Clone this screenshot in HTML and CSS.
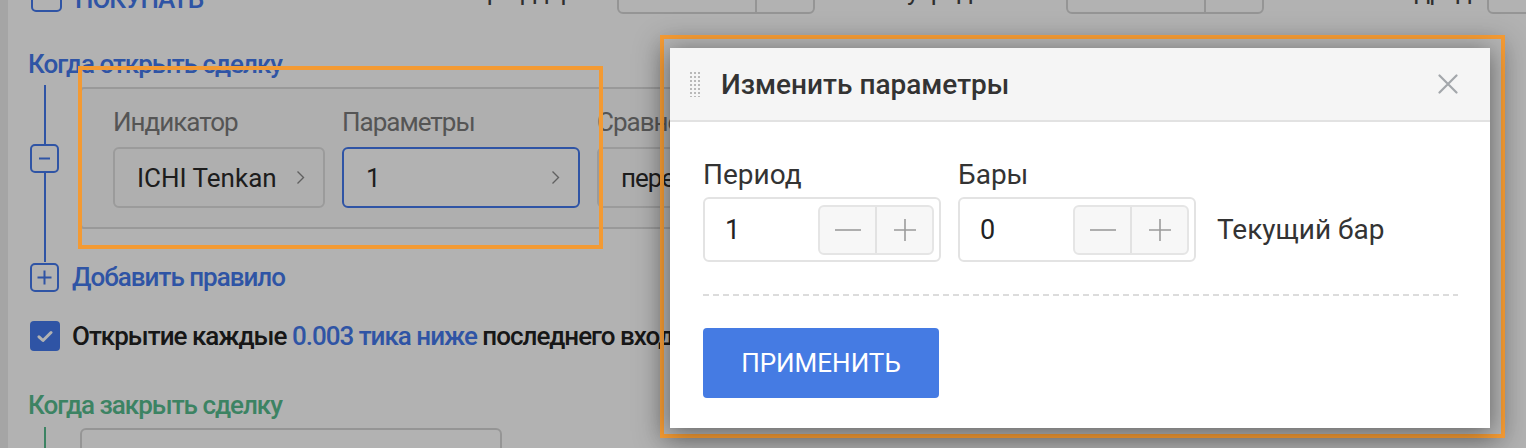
FILE: index.html
```html
<!DOCTYPE html>
<html lang="ru">
<head>
<meta charset="utf-8">
<title>Изменить параметры</title>
<link rel="stylesheet" href="styles.css">
</head>
<body>
<div class="page">
  <div class="strip"></div>
  <main class="main">
    <div class="topbar">
      <span class="cb-outline"></span>
      <span class="buy">ПОКУПАТЬ</span>
      <span class="top-label tl1">Размер ордера</span>
      <span class="top-input"><span class="top-div"></span></span>
      <span class="top-label tl2">Шаг усреднения</span>
      <span class="top-input"><span class="top-div"></span></span>
      <span class="top-label tl3">Подряд</span>
      <span class="top-input short"></span>
    </div>

    <div class="sec-title blue">Когда открыть сделку</div>

    <div class="rule-row">
      <div class="rail">
        <span class="seg seg-top"></span>
        <span class="rbox"><svg width="13" height="13" viewBox="0 0 13 13"><path d="M1 6.5H12" stroke="currentColor" stroke-width="2"/></svg></span>
        <span class="seg seg-fill"></span>
      </div>
      <div class="card">
        <div class="field f-ind">
          <div class="flabel">Индикатор</div>
          <div class="select">
            <span class="sval">ICHI Tenkan</span>
            <svg class="chev" width="9" height="15" viewBox="0 0 9 15"><path d="M1.5 1.5L7.5 7.5L1.5 13.5" fill="none" stroke="currentColor" stroke-width="1.4"/></svg>
          </div>
        </div>
        <div class="field f-par">
          <div class="flabel">Параметры</div>
          <div class="select active">
            <span class="sval">1</span>
            <svg class="chev" width="9" height="15" viewBox="0 0 9 15"><path d="M1.5 1.5L7.5 7.5L1.5 13.5" fill="none" stroke="currentColor" stroke-width="1.4"/></svg>
          </div>
        </div>
        <div class="field f-cmp">
          <div class="flabel">Сравнение</div>
          <div class="select">
            <span class="sval cyr">пересекает снизу</span>
          </div>
        </div>
      </div>
    </div>

    <div class="add-row">
      <span class="rbox"><svg width="15" height="15" viewBox="0 0 15 15"><path d="M0.5 7.5H14.5M7.5 0.5V14.5" stroke="currentColor" stroke-width="2"/></svg></span>
      <span class="add-text">Добавить правило</span>
    </div>

    <div class="check-row">
      <span class="cb-checked"><svg width="16" height="13" viewBox="0 0 16 13"><path d="M2 6.8L6 10.5L14 2.5" fill="none" stroke="#fff" stroke-width="3" stroke-linecap="round" stroke-linejoin="round"/></svg></span>
      <span class="check-text">Открытие каждые <span class="blue-txt">0.003 тика ниже</span> последнего входа</span>
    </div>

    <div class="sec-title green">Когда закрыть сделку</div>

    <div class="close-row">
      <div class="rail green-rail"><span class="seg seg-fill"></span></div>
      <div class="card2"></div>
    </div>
  </main>
</div>

<div class="overlay"></div>

<div class="hl hl-left"></div>
<div class="hl hl-modal"></div>

<div class="modal">
  <div class="modal-head">
    <span class="grip"></span>
    <span class="modal-title">Изменить параметры</span>
    <svg class="close" width="20" height="20" viewBox="0 0 20 20"><path d="M1.5 1.5L18.5 18.5M18.5 1.5L1.5 18.5" stroke="#a3a7ab" stroke-width="2.2" stroke-linecap="round"/></svg>
  </div>
  <div class="modal-body">
    <div class="params">
      <div class="pfield">
        <div class="plabel">Период</div>
        <div class="num">
          <span class="num-val">1</span>
          <span class="stepper">
            <span class="step"><svg width="26" height="4" viewBox="0 0 26 4"><path d="M0 2H26" stroke="#9b9b9b" stroke-width="1.6"/></svg></span>
            <span class="step-div"></span>
            <span class="step"><svg width="22" height="22" viewBox="0 0 22 22"><path d="M0 11H22M11 0V22" stroke="#9b9b9b" stroke-width="1.6"/></svg></span>
          </span>
        </div>
      </div>
      <div class="pfield">
        <div class="plabel">Бары</div>
        <div class="num">
          <span class="num-val">0</span>
          <span class="stepper">
            <span class="step"><svg width="26" height="4" viewBox="0 0 26 4"><path d="M0 2H26" stroke="#9b9b9b" stroke-width="1.6"/></svg></span>
            <span class="step-div"></span>
            <span class="step"><svg width="22" height="22" viewBox="0 0 22 22"><path d="M0 11H22M11 0V22" stroke="#9b9b9b" stroke-width="1.6"/></svg></span>
          </span>
        </div>
      </div>
      <div class="suffix">Текущий бар</div>
    </div>
    <div class="dash"></div>
    <button class="apply">ПРИМЕНИТЬ</button>
  </div>
</div>
</body>
</html>
```

FILE: styles.css
```css
* { box-sizing: border-box; }

html, body {
  margin: 0;
  padding: 0;
}

body {
  width: 1526px;
  height: 448px;
  overflow: hidden;
  background: #fff;
  font-family: Roboto, "Liberation Sans", sans-serif;
  color: #2a2a2a;
  position: relative;
}

.page {
  display: flex;
  height: 448px;
  overflow: hidden;
}

.strip {
  width: 8px;
  flex: none;
  background: #ececec;
}

.main {
  flex: 1;
  padding-left: 20px;
  display: flex;
  flex-direction: column;
}

/* top bar (only its bottom is visible) */
.topbar {
  display: flex;
  align-items: flex-end;
  height: 14px;
  overflow: hidden;
  flex: none;
}

.cb-outline {
  flex: none;
  width: 31px;
  height: 31px;
  margin-left: 3px;
  margin-bottom: 2px;
  border: 2px solid #4479ec;
  border-radius: 5px;
}

.buy {
  flex: none;
  width: 330px;
  margin-left: 13px;
  font-size: 26px;
  line-height: 30px;
  color: #4479ec;
  font-weight: 500;
  letter-spacing: -1px;
}

.top-label {
  flex: none;
  font-size: 26px;
  line-height: 30px;
  margin-bottom: 8px;
  color: #444;
  letter-spacing: -1px;
  white-space: nowrap;
  overflow: hidden;
}

.tl1 { width: 212px; padding-left: 10px; }
.tl2 { width: 251px; padding-left: 40px; }
.tl3 { width: 223px; padding-left: 120px; }

.top-input {
  flex: none;
  width: 198px;
  height: 40px;
  border: 2px solid #d6d6d6;
  border-radius: 6px;
  display: flex;
}

.top-input.short { width: 100px; }

.top-div {
  margin-left: 136px;
  width: 2px;
  background: #d6d6d6;
}

/* section titles */
.sec-title {
  font-size: 26px;
  line-height: 30px;
  font-weight: 500;
  letter-spacing: -1px;
  flex: none;
}

.sec-title.blue {
  color: #4479ec;
  margin-top: 35px;
}

.sec-title.green {
  color: #56bc8e;
  margin-top: 39px;
}

/* rule rows */
.rule-row {
  display: flex;
  margin-top: 6px;
  flex: none;
}

.rail {
  width: 29px;
  margin-left: 2px;
  display: flex;
  flex-direction: column;
  align-items: center;
  flex: none;
  color: #4479ec;
}

.seg {
  width: 2px;
  background: #4479ec;
}

.seg-top { height: 59px; }
.seg-fill { flex: 1; }

.rbox {
  width: 29px;
  height: 29px;
  border: 2px solid #4479ec;
  border-radius: 5px;
  display: flex;
  align-items: center;
  justify-content: center;
  color: #4479ec;
  flex: none;
}

.card {
  margin-left: 21px;
  margin-top: 2px;
  margin-bottom: 33px;
  width: 900px;
  border: 2px solid #dcdcdc;
  border-radius: 4px;
  background: #fbfbfb;
  padding: 18px 0 19px 31px;
  display: flex;
  gap: 17px;
}

.field { flex: none; }
.f-ind { width: 212px; }
.f-par { width: 238px; }
.f-cmp { width: 300px; }

.flabel {
  font-size: 26px;
  line-height: 30px;
  color: #7a7a7a;
  margin-bottom: 10px;
  white-space: nowrap;
  letter-spacing: -1px;
}

.select {
  height: 61px;
  border: 2px solid #dedede;
  border-radius: 6px;
  background: #fbfbfb;
  display: flex;
  align-items: center;
  padding: 0 18px 0 22px;
  font-size: 26px;
  color: #2a2a2a;
}

.select.active {
  border-color: #4479ec;
  background: #fff;
}

.sval {
  flex: 1;
  white-space: nowrap;
}

.sval.cyr { letter-spacing: -1px; }

.chev {
  color: #8a8a8a;
  flex: none;
}

/* add rule */
.add-row {
  display: flex;
  align-items: center;
  margin-left: 2px;
  flex: none;
}

.add-text {
  margin-left: 13px;
  font-size: 26px;
  line-height: 30px;
  font-weight: 500;
  letter-spacing: -1px;
  color: #4479ec;
}

/* checkbox row */
.check-row {
  display: flex;
  align-items: center;
  margin-top: 29px;
  margin-left: 2px;
  flex: none;
}

.cb-checked {
  width: 30px;
  height: 30px;
  border-radius: 4px;
  background: #4479ec;
  display: flex;
  align-items: center;
  justify-content: center;
  flex: none;
}

.check-text {
  margin-left: 12px;
  font-size: 26px;
  line-height: 30px;
  font-weight: 500;
  letter-spacing: -1px;
  color: #222;
  white-space: nowrap;
}

.blue-txt { color: #4479ec; }

/* close section */
.close-row {
  display: flex;
  margin-top: 7px;
  flex: 1;
  min-height: 0;
}

.green-rail .seg { background: #56bc8e; }

.card2 {
  margin-left: 21px;
  margin-top: 1px;
  width: 422px;
  height: 80px;
  border: 2px solid #d6d6d6;
  border-radius: 6px;
}

/* overlay */
.overlay {
  position: absolute;
  inset: 0;
  background: rgba(0, 0, 0, 0.3);
}

/* annotation frames */
.hl {
  position: absolute;
  border: 4px solid #f39a33;
}

.hl-left {
  left: 78px;
  top: 66px;
  width: 525px;
  height: 183px;
}

.hl-modal {
  left: 660px;
  top: 35px;
  width: 845px;
  height: 403px;
  box-shadow: 0 6px 26px rgba(0, 0, 0, 0.25);
}

/* modal */
.modal {
  position: absolute;
  left: 670px;
  top: 48px;
  width: 820px;
  height: 380px;
  background: #fff;
  box-shadow: 0 4px 22px rgba(0, 0, 0, 0.45);
  display: flex;
  flex-direction: column;
}

.modal-head {
  height: 74px;
  flex: none;
  background: #f5f5f5;
  border-bottom: 2px solid #e2e2e2;
  display: flex;
  align-items: center;
  padding-left: 19px;
  padding-right: 32px;
}

.grip {
  width: 12px;
  height: 26px;
  background-image: radial-gradient(circle, #b9b9b9 0.9px, transparent 1.2px);
  background-size: 4px 4px;
  flex: none;
}

.modal-title {
  margin-left: 20px;
  font-size: 28px;
  font-weight: 500;
  color: #333;
}

.close {
  margin-left: auto;
  flex: none;
}

.modal-body {
  padding: 38px 32px 0 33px;
  display: flex;
  flex-direction: column;
  align-items: flex-start;
}

.params {
  display: flex;
  align-items: flex-end;
  gap: 17px;
}

.pfield { flex: none; }

.plabel {
  font-size: 28px;
  line-height: 30px;
  color: #333;
  margin-bottom: 7px;
}

.num {
  width: 238px;
  height: 65px;
  border: 2px solid #e3e3e3;
  border-radius: 6px;
  display: flex;
  align-items: center;
  padding: 0 5px 0 20px;
}

.num-val {
  flex: 1;
  font-size: 27px;
  color: #222;
}

.stepper {
  width: 116px;
  height: 50px;
  border: 2px solid #e5e5e5;
  border-radius: 6px;
  background: #f7f7f7;
  display: flex;
  flex: none;
}

.step {
  flex: 1;
  display: flex;
  align-items: center;
  justify-content: center;
}

.step-div {
  width: 2px;
  background: #e2e2e2;
}

.suffix {
  height: 65px;
  display: flex;
  align-items: center;
  margin-left: 4px;
  font-size: 28px;
  color: #333;
}

.dash {
  align-self: stretch;
  height: 2px;
  margin-top: 32px;
  background-image: repeating-linear-gradient(90deg, #dcdcdc 0 6px, transparent 6px 10px);
}

.apply {
  margin-top: 32px;
  width: 236px;
  height: 70px;
  border: none;
  border-radius: 4px;
  background: #457be3;
  color: #fff;
  font-family: Roboto, "Liberation Sans", sans-serif;
  font-size: 26px;
  padding: 0;
}
```
